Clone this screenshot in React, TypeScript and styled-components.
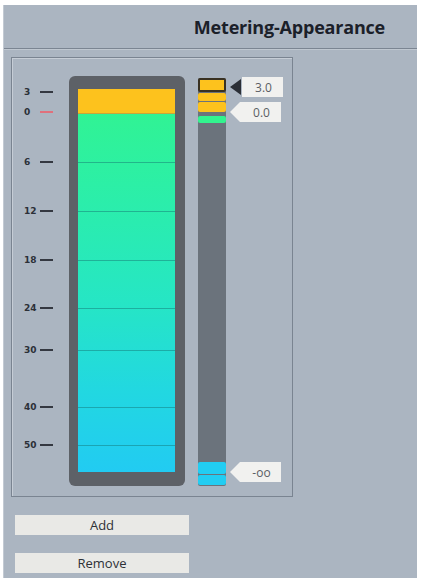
import React from 'react';
import styled, { createGlobalStyle } from 'styled-components';

const GlobalStyle = createGlobalStyle`
  html, body { margin: 0; padding: 0; background: #ffffff; }
  body { font-family: 'Open Sans', 'Liberation Sans', sans-serif; }
`;

const BG = '#abb5c1';

const Window = styled.div`
  margin: 5px 4px 0 3px;
  height: 573px;
  background: ${BG};
  border-left: 1px solid #c3cad3;
  display: flex;
  flex-direction: column;
  box-sizing: border-box;
`;

const Header = styled.div`
  height: 44px;
  border-bottom: 1px solid #7b8592;
  box-shadow: 0 1px 0 #bfc7d0;
  display: flex;
  align-items: center;
  justify-content: flex-end;
  padding-right: 32px;
  box-sizing: border-box;
`;

const Title = styled.h1`
  margin: 0;
  font-size: 18px;
  font-weight: 700;
  color: #1b2029;
  letter-spacing: -0.2px;
`;

const Body = styled.div`
  padding: 8px 0 0 7px;
  display: flex;
  flex-direction: column;
`;

const GroupBox = styled.div`
  width: 282px;
  height: 440px;
  box-sizing: border-box;
  border: 1px solid #7a8491;
  box-shadow: inset 1px 1px 0 #c6cdd6;
  display: flex;
  align-items: flex-start;
`;

const Scale = styled.div`
  position: relative;
  width: 57px;
  height: 438px;
  flex-shrink: 0;
`;

const Mark = styled.div`
  position: absolute;
  left: 0;
  width: 57px;
  height: 10px;
  margin-top: -5px;
  display: flex;
  align-items: center;
`;

const MarkLabel = styled.span`
  width: 26px;
  padding-left: 12px;
  box-sizing: border-box;
  font-family: 'DejaVu Sans', sans-serif;
  font-size: 9px;
  font-weight: 700;
  color: #2c3038;
  text-align: left;
`;

const Tick = styled.span<{ $red?: boolean }>`
  width: 13px;
  height: 2px;
  margin-left: 2px;
  background: ${(p) => (p.$red ? '#e0707c' : '#343841')};
`;

const MeterFrame = styled.div`
  margin-top: 18px;
  width: 116px;
  height: 410px;
  border-radius: 6px;
  background: #5d6167;
  padding: 13px 10px 14px 9px;
  box-sizing: border-box;
  flex-shrink: 0;
`;

const Bar = styled.div`
  position: relative;
  height: 100%;
  display: flex;
  flex-direction: column;
  background: linear-gradient(
    to bottom,
    #32f48e 0%,
    #2cefa6 25%,
    #26e6c4 55%,
    #22d8e0 78%,
    #22cbf2 100%
  );
`;

const Overload = styled.div`
  height: 24px;
  background: #fdc21d;
  border-bottom: 1px solid #c8a53a;
`;

const Divider = styled.div`
  position: absolute;
  left: 0;
  right: 0;
  height: 1px;
  background: rgba(20, 110, 110, 0.45);
`;

const Strip = styled.div`
  position: relative;
  margin: 20px 0 0 13px;
  width: 28px;
  height: 408px;
  background: #6b737c;
  border-radius: 2px;
  flex-shrink: 0;
`;

const Segment = styled.div<{ $color: string; $outlined?: boolean }>`
  position: absolute;
  left: 0;
  right: 0;
  box-sizing: border-box;
  background: ${(p) => p.$color};
  border: ${(p) => (p.$outlined ? '2px solid #3a3222' : 'none')};
  border-radius: 2px;
`;

const Tags = styled.div`
  position: relative;
  margin-left: 4px;
  width: 53px;
  height: 438px;
  flex-shrink: 0;
`;

const Tag = styled.div`
  position: absolute;
  left: 0;
  height: 20px;
  display: flex;
  align-items: stretch;
`;

const Pointer = styled.div<{ $active?: boolean }>`
  width: ${(p) => (p.$active ? '11px' : '10px')};
  margin-right: ${(p) => (p.$active ? '1px' : '0')};
  background: ${(p) => (p.$active ? '#2b2f36' : '#f1f1ef')};
  clip-path: ${(p) =>
    p.$active ? 'polygon(0 50%, 100% 10%, 100% 90%)' : 'polygon(0 50%, 100% 0, 100% 100%)'};
`;

const TagBox = styled.div`
  width: 41px;
  background: #f1f1ef;
  display: flex;
  align-items: center;
  justify-content: center;
  font-family: 'Open Sans', sans-serif;
  font-size: 12px;
  color: #5a5e64;
  padding-left: 2px;
  box-sizing: border-box;
`;

const Button = styled.button<{ $gap: number }>`
  margin: ${(p) => p.$gap}px 0 0 4px;
  width: 174px;
  height: 20px;
  border: none;
  border-radius: 0;
  background: #e9e9e6;
  font-family: 'Open Sans', sans-serif;
  font-size: 13px;
  color: #2e3136;
  padding: 0;
  cursor: pointer;
`;

const marks = [
  { label: '3', y: 34 },
  { label: '0', y: 54, red: true },
  { label: '6', y: 104 },
  { label: '12', y: 153 },
  { label: '18', y: 202 },
  { label: '24', y: 250 },
  { label: '30', y: 292 },
  { label: '40', y: 349 },
  { label: '50', y: 387 },
];

const dividers = [73, 122, 171, 219, 261, 318, 356];

const segments = [
  { top: 0, h: 14, color: '#fdc21d', outlined: true },
  { top: 15, h: 8, color: '#fdc21d' },
  { top: 24, h: 10, color: '#fdc21d' },
  { top: 38, h: 7, color: '#32f48e' },
  { top: 384, h: 12, color: '#22cdf2' },
  { top: 397, h: 10, color: '#22cdf2' },
];

const tags = [
  { label: '3.0', top: 19, active: true },
  { label: '0.0', top: 44 },
  { label: '-oo', top: 404 },
];

const App: React.FC = () => (
  <>
    <GlobalStyle />
    <Window>
      <Header>
        <Title>Metering-Appearance</Title>
      </Header>
      <Body>
        <GroupBox>
          <Scale>
            {marks.map((m) => (
              <Mark key={m.label} style={{ top: m.y }}>
                <MarkLabel>{m.label}</MarkLabel>
                <Tick $red={m.red} />
              </Mark>
            ))}
          </Scale>
          <MeterFrame>
            <Bar>
              <Overload />
              {dividers.map((d) => (
                <Divider key={d} style={{ top: d }} />
              ))}
            </Bar>
          </MeterFrame>
          <Strip>
            {segments.map((s, i) => (
              <Segment
                key={i}
                $color={s.color}
                $outlined={s.outlined}
                style={{ top: s.top, height: s.h }}
              />
            ))}
          </Strip>
          <Tags>
            {tags.map((t) => (
              <Tag key={t.label} style={{ top: t.top }}>
                <Pointer $active={t.active} />
                <TagBox>{t.label}</TagBox>
              </Tag>
            ))}
          </Tags>
        </GroupBox>
        <Button $gap={18}>Add</Button>
        <Button $gap={18}>Remove</Button>
      </Body>
    </Window>
  </>
);

export default App;
